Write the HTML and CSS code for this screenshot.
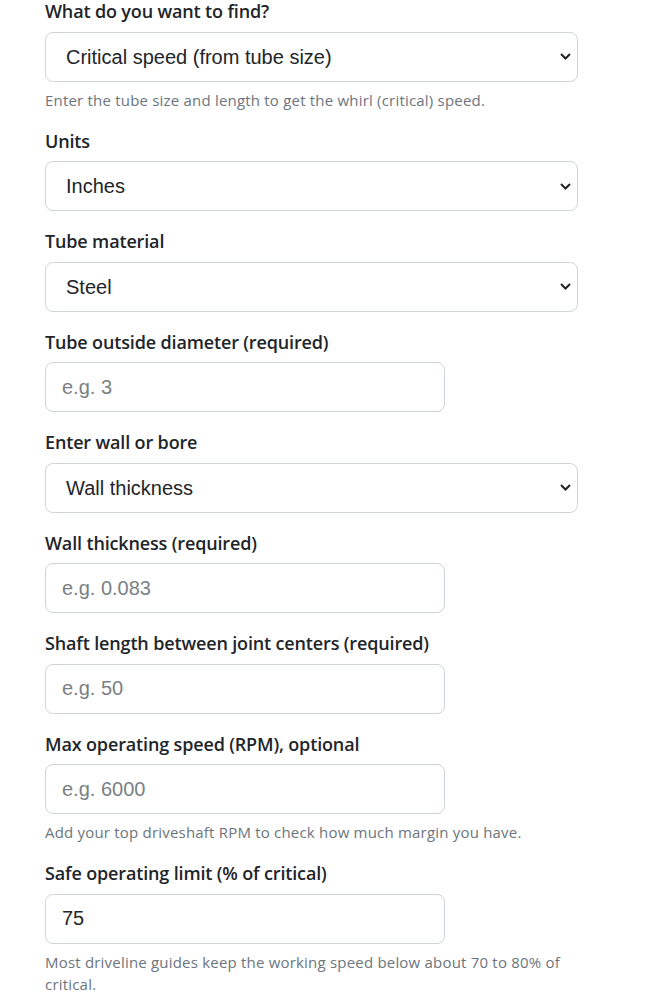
FILE: index.html
```html
<!DOCTYPE html>
<html lang="en">
<head>
<meta charset="utf-8">
<title>Driveshaft critical speed</title>
<link rel="stylesheet" href="styles.css">
</head>
<body>
<form class="calc">
  <div class="field">
    <label class="field-label" for="mode">What do you want to find?</label>
    <select class="control control-select" id="mode">
      <option>Critical speed (from tube size)</option>
    </select>
    <p class="help">Enter the tube size and length to get the whirl (critical) speed.</p>
  </div>
  <div class="field">
    <label class="field-label" for="units">Units</label>
    <select class="control control-select" id="units">
      <option>Inches</option>
    </select>
  </div>
  <div class="field">
    <label class="field-label" for="material">Tube material</label>
    <select class="control control-select" id="material">
      <option>Steel</option>
    </select>
  </div>
  <div class="field">
    <label class="field-label" for="od">Tube outside diameter (required)</label>
    <input class="control control-input" id="od" type="text" placeholder="e.g. 3">
  </div>
  <div class="field">
    <label class="field-label" for="wallmode">Enter wall or bore</label>
    <select class="control control-select" id="wallmode">
      <option>Wall thickness</option>
    </select>
  </div>
  <div class="field">
    <label class="field-label" for="wall">Wall thickness (required)</label>
    <input class="control control-input" id="wall" type="text" placeholder="e.g. 0.083">
  </div>
  <div class="field">
    <label class="field-label" for="len">Shaft length between joint centers (required)</label>
    <input class="control control-input" id="len" type="text" placeholder="e.g. 50">
  </div>
  <div class="field">
    <label class="field-label" for="rpm">Max operating speed (RPM), optional</label>
    <input class="control control-input" id="rpm" type="text" placeholder="e.g. 6000">
    <p class="help">Add your top driveshaft RPM to check how much margin you have.</p>
  </div>
  <div class="field">
    <label class="field-label" for="limit">Safe operating limit (% of critical)</label>
    <input class="control control-input" id="limit" type="text" value="75">
    <p class="help">Most driveline guides keep the working speed below about 70 to 80% of critical.</p>
  </div>
</form>
</body>
</html>
```
FILE: styles.css
```css
* {
  box-sizing: border-box;
}

html, body {
  margin: 0;
  padding: 0;
  background: #ffffff;
}

body {
  font-family: "Open Sans", "Noto Sans", sans-serif;
  color: #212529;
}

.calc {
  width: 578px;
  padding-left: 45px;
}

.field {
  margin-bottom: 19px;
}

.field-label {
  display: block;
  font-size: 18px;
  line-height: 22px;
  font-weight: 600;
  letter-spacing: -0.15px;
  margin-bottom: 9.5px;
  color: #212529;
}

.control {
  display: block;
  height: 50px;
  font-family: "Liberation Sans", Arial, sans-serif;
  font-size: 20px;
  line-height: 30px;
  color: #212529;
  background-color: #ffffff;
  border: 1px solid #ced4da;
  border-radius: 8px;
  outline: none;
  margin: 0;
}

.control-select {
  width: 533px;
  padding: 9px 30px 9px 20px;
  appearance: none;
  -webkit-appearance: none;
  background-image: url("data:image/svg+xml,%3Csvg xmlns='http://www.w3.org/2000/svg' viewBox='0 0 11 7'%3E%3Cpath d='M1 1l4.5 4.5L10 1' fill='none' stroke='%23222' stroke-width='2'/%3E%3C/svg%3E");
  background-repeat: no-repeat;
  background-size: 11px 7px;
  background-position: right 6px center;
}

.control-input {
  width: 400px;
  padding: 9px 16px;
}

.control-input::placeholder {
  color: #7a7f84;
  opacity: 1;
}

.help {
  margin: 7px 0 0;
  font-size: 15px;
  line-height: 22px;
  letter-spacing: 0.2px;
  color: #6c757d;
}
```
